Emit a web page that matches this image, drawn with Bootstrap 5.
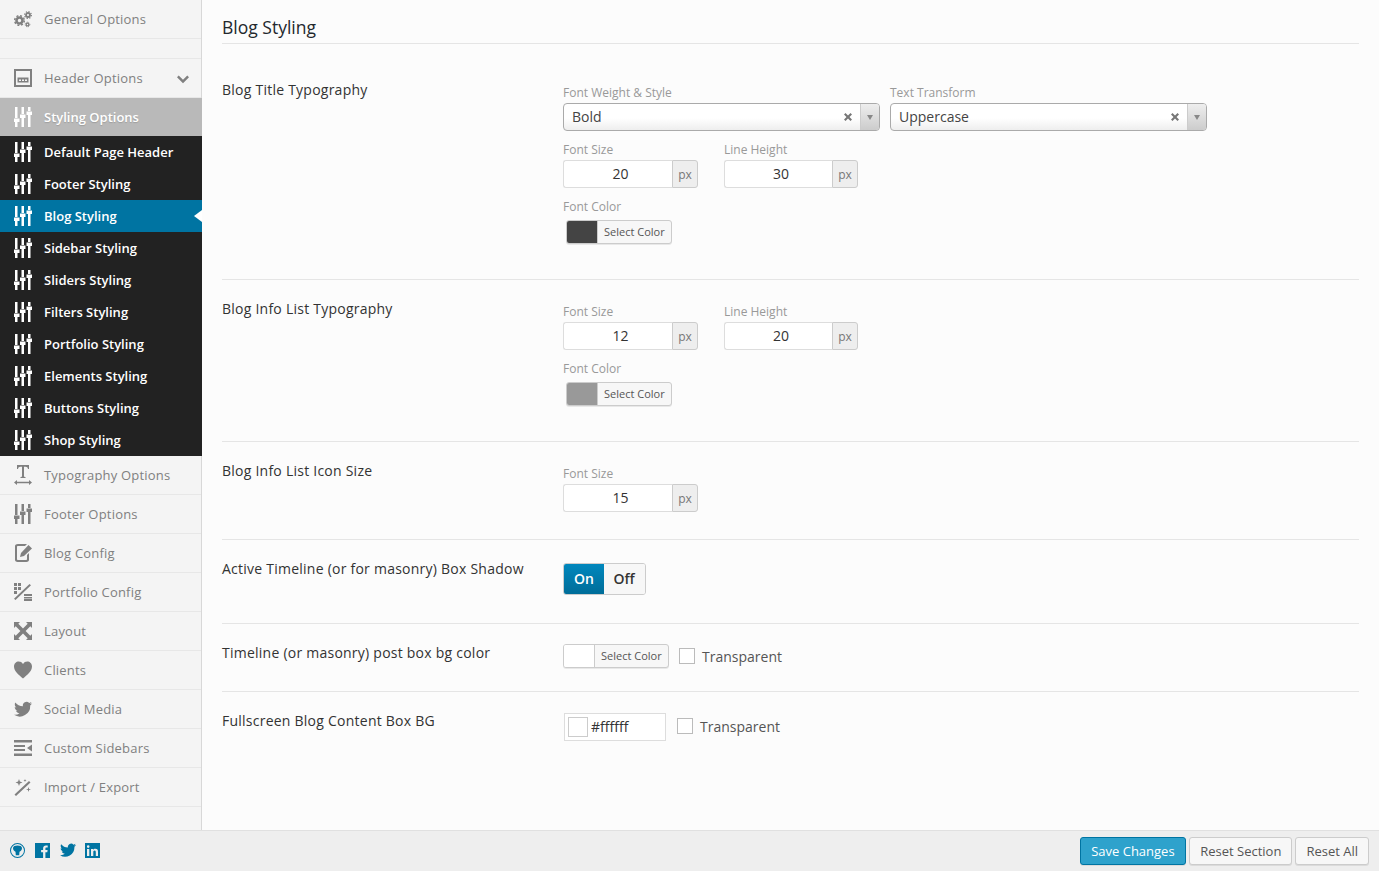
<!DOCTYPE html>
<html lang="en">
<head>
  <meta charset="UTF-8" />
  <meta name="viewport" content="width=device-width, initial-scale=1.0"/>
  <title>Blog Styling</title>
  <link href="https://cdn.jsdelivr.net/npm/bootstrap@5.3.3/dist/css/bootstrap.min.css" rel="stylesheet">
  <style>
    html, body { height: 100%; }
    body { font-family: "Open Sans", "Liberation Sans", sans-serif; font-size: 14px; color: #333; background: #fcfcfc; overflow: hidden; }
    .page-wrap { height: 871px; }
    .side-col { width: 202px; flex: none; background: #f4f4f4; border-right: 1px solid #d8d8d8; }
    .side-item { height: 39px; padding: 2px 0 0 14px; border-bottom: 1px solid #e7e7e7; color: #808080; font-size: 13px; font-weight: 500; letter-spacing: .2px; text-decoration: none; }
    .side-item svg { width: 18px; height: 20px; margin: -2px 12px 0 0; flex: none; fill: currentColor; }
    .side-spacer { height: 20px; border-bottom: 1px solid #e7e7e7; }
    .side-item.is-open { background: #b9b9b9; color: #fff; font-weight: 600; letter-spacing: 0; border-bottom: 0; height: 38px; margin-right: -1px; text-shadow: 0 1px 1px rgba(0,0,0,.15); }
    .side-item svg.side-chevron { margin: 0 12px 0 auto; width: 12px; height: 12px; }
    .sub-list { background: #222; margin-right: -1px; }
    .sub-item { height: 32px; padding: 2px 0 0 14px; color: #fff; font-size: 13px; font-weight: 600; position: relative; text-decoration: none; }
    .sub-item svg { width: 18px; height: 20px; margin-right: 12px; flex: none; fill: currentColor; margin-top: -2px; }
    .sub-item.is-current { background: #0074a2; }
    .sub-item.is-current::after { content: ""; position: absolute; right: 0; top: 10px; border: 6px solid transparent; border-right: 8px solid #fff; border-left: 0; }
    .main-col { padding: 0 20px; min-width: 0; }
    .main-title { font-size: 17.5px; font-weight: 500; line-height: 24px; padding: 15px 0 4px; margin: 0; color: #23282d; border-bottom: 1px solid #e5e5e5; height: 44px; }
    .opt-row { border-bottom: 1px solid #e5e5e5; display: flex; }
    .opt-row.no-line { border-bottom: 0; }
    .opt-name { width: 341px; flex: none; font-size: 14px; font-weight: 500; letter-spacing: .24px; line-height: 20px; color: #333; white-space: nowrap; }
    .opt-body { flex: 1; min-width: 0; }
    .fld-label { display: block; font-size: 12px; line-height: 14px; color: #999; margin-bottom: 3px; }
    .pick-box { height: 28px; width: 317px; border: 1px solid #aaa; border-radius: 4px; background: linear-gradient(#fff 55%, #eee); padding-left: 8px; }
    .pick-box span.val { font-size: 14px; color: #444; flex: 1; margin-top: -2px; }
    .pick-x { width: 8px; height: 8px; margin-right: 8px; fill: #777; }
    .pick-arrow { width: 19px; height: 100%; border-left: 1px solid #ccc; background: linear-gradient(#eee, #ccc); border-radius: 0 3px 3px 0; }
    .pick-arrow i { display: block; border: 3px solid transparent; border-top: 5px solid #888; border-bottom: 0; }
    .num-group { height: 28px; display: flex; }
    .num-input { width: 109px; padding-left: 5px; border: 1px solid #ddd; border-right: 0; border-radius: 3px 0 0 3px; background: #fff; text-align: center; font-size: 14px; line-height: 26px; color: #333; }
    .num-input.is-short { width: 108px; }
    .num-unit { width: 26px; border: 1px solid #ccc; border-radius: 0 3px 3px 0; background: #eee; color: #777; font-size: 12px; text-align: center; line-height: 28px; }
    .color-btn { height: 24px; width: 106px; margin-left: 3px; border: 1px solid #ccc; border-radius: 3px; background: #f7f7f7; box-shadow: 0 1px 0 rgba(0,0,0,.08); overflow: hidden; font-size: 11px; color: #555; }
    .color-btn i { display: block; width: 31px; height: 100%; border-right: 1px solid #ccc; flex: none; }
    .color-btn span { padding-left: 6px; white-space: nowrap; }
    .switch-box { height: 32px; width: 83px; border: 1px solid #ccc; border-radius: 3px; overflow: hidden; font-size: 14px; font-weight: 600; }
    .switch-on { width: 40px; background: linear-gradient(#0087bd, #006d99); color: #fff; text-align: center; line-height: 30px; }
    .switch-off { flex: 1; background: #f7f7f7; color: #333; text-align: center; line-height: 30px; padding-right: 1px; }
    .tick-box { width: 16px; height: 16px; border: 1px solid #bbb; background: #fff; flex: none; }
    .tick-text { font-size: 14px; color: #555; margin-left: 7px; }
    .hex-box { width: 102px; height: 28px; margin-top: 1px; border: 1px solid #ddd; background: #fff; padding-left: 3px; font-size: 14px; color: #333; }
    .hex-box i { display: block; width: 20px; height: 20px; border: 1px solid #ccc; margin-right: 3px; }
    .foot-bar { height: 41px; flex: none; background: #eee; border-top: 1px solid #e0e0e0; padding: 0 10px 2px; }
    .foot-bar svg { width: 15px; height: 15px; fill: #0074a2; }
    .foot-bar svg.foot-bird { width: 16px; height: 16px; margin: 0 -.5px; }
    .foot-btn { height: 28px; font-size: 13px; line-height: 26px; padding: 0 10px; border-radius: 3px; border: 1px solid #ccc; background: #f7f7f7; color: #555; box-shadow: 0 1px 0 rgba(0,0,0,.08); }
    .foot-btn.is-save { background: #2ea2cc; border-color: #0074a2; color: #fff; padding-right: 10px; width: 106px; }
    .foot-btns { margin-top: 2px; gap: 3px; margin-left: auto; }
  </style>
</head>
<body>
  <svg width="0" height="0" class="d-block">
    <symbol id="ic-sliders" viewBox="0 0 18 20"><path d="M1 0h2.500v11H1zM1 15h2.500v5H1zM0 11.500h5.500V15H0zM7.500 0H10v7H7.500zM7.500 11H10v9H7.500zM6 7.500h5.500V11H6zM14 0h2.500v4H14zM14 8h2.500v12H14zM12.500 4.500H18V8h-5.500z"/></symbol>
    <symbol id="ic-gears" viewBox="0 0 18 20"><g fill="none" stroke="currentColor"><circle cx="5.500" cy="11.500" r="3" stroke-width="2.600"/><circle cx="5.500" cy="11.500" r="4.800" stroke-width="1.500" stroke-dasharray="2 1.770"/><circle cx="14" cy="6" r="2" stroke-width="1.800"/><circle cx="14" cy="6" r="3.400" stroke-width="1.200" stroke-dasharray="1.300 1.370"/><circle cx="13.500" cy="15.500" r="1.300" stroke-width="1.200"/><circle cx="13.500" cy="15.500" r="2.300" stroke-width="1" stroke-dasharray="1 .8"/></g></symbol>
    <symbol id="ic-header" viewBox="0 0 18 20"><path fill-rule="evenodd" d="M0 1h18v18H0zM2 3v14h14V3zM3.500 9.500h11v5h-11zM5 11.500v1.500h2v-1.500zM8 11.500v1.500h2v-1.500zM11 11.500v1.500h2v-1.500z"/></symbol>
    <symbol id="ic-chevron" viewBox="0 0 14 14"><path d="M2 3l5 5 5-5 2 2-7 7-7-7z"/></symbol>
    <symbol id="ic-type" viewBox="0 0 18 20"><path d="M3 0h12v4h-1c-.2-1.600-1-2.300-2.500-2.300H10V11c0 .8.400 1 1.500 1v1h-5v-1c1.100 0 1.500-.2 1.500-1V1.700H6.500C5 1.700 4.200 2.400 4 4H3zM0 17.500l3-2.500v1.700h12V15l3 2.500-3 2.500v-1.700H3V20z"/></symbol>
    <symbol id="ic-doc" viewBox="0 0 18 20"><path d="M4 1h9l-2 2H4c-.6 0-1 .4-1 1v12c0 .6.400 1 1 1h8c.6 0 1-.4 1-1v-4l2-2v7c0 1.100-1.400 2-2.500 2h-9C2.400 19 1 18.100 1 17V3c0-1.100 1.400-2 3-2z"/><path d="M14.500 2L18 5.500 10 13l-4 1 1-4z"/></symbol>
    <symbol id="ic-percent" viewBox="0 0 18 20"><path d="M0 1h3v3H0zM4 1h3v3H4zM0 5h3v3H0zM4 5h3v3H4zM0 9h3v3H0zM15.500 2L17 3.300 1.500 18 0 16.700zM10 12h8v2h-8zM10 15h8v1.500h-8zM10 17h8v2h-8z"/></symbol>
    <symbol id="ic-arrows" viewBox="0 0 18 20"><path d="M0 1h6L4.300 2.700 9 7.400l4.700-4.700L12 1h6v6l-1.700-1.700L11.600 10l4.700 4.700L18 13v6h-6l1.700-1.700L9 12.600l-4.700 4.700L6 19H0v-6l1.700 1.700L6.400 10 1.700 5.300 0 7z"/></symbol>
    <symbol id="ic-heart" viewBox="0 0 18 20"><path d="M9 18.500C5 15 0 11.500 0 6.500 0 3.500 2.200 1.500 4.700 1.500 6.500 1.500 8 2.300 9 4c1-1.700 2.500-2.500 4.300-2.500C15.800 1.500 18 3.500 18 6.500c0 5-5 8.500-9 12z"/></symbol>
    <symbol id="ic-bird" viewBox="0 0 18 18"><path d="M18 3.500c-.7.3-1.400.5-2.100.6.800-.5 1.300-1.200 1.600-2-.7.400-1.500.7-2.300.9A3.700 3.700 0 0 0 8.900 6.300C5.800 6.200 3.100 4.700 1.300 2.500c-1 1.700-.5 3.800 1.100 4.900-.6 0-1.200-.2-1.700-.5 0 1.800 1.300 3.300 3 3.700-.5.100-1.100.2-1.700.1.500 1.500 1.900 2.500 3.500 2.600A7.500 7.500 0 0 1 0 14.800 10.500 10.500 0 0 0 16.200 5.400c.7-.5 1.300-1.200 1.800-1.900z"/></symbol>
    <symbol id="ic-sidebars" viewBox="0 0 18 20"><path d="M0 2h18v2.500H0zM0 7h11v2H0zM0 11h11v2H0zM0 15.500h18V18H0zM18 6.500v7L13 10z"/></symbol>
    <symbol id="ic-wand" viewBox="0 0 18 20"><path d="M15 4l1.500 1.500L2 19 .5 17.500zM5 2l.9 2.600L8.500 5.500 5.900 6.400 5 9 4.100 6.400 1.500 5.500 4.100 4.600zM14.500 10l.6 1.900 1.900.6-1.900.6-.6 1.900-.6-1.900-1.900-.6 1.900-.6zM11 2l.4 1.100 1.100.4-1.100.4L11 5l-.4-1.100-1.100-.4 1.100-.4z"/></symbol>
    <symbol id="ic-fb" viewBox="0 0 15 15"><path fill-rule="evenodd" d="M0 0h15v15H0zM10.400 15V9.300h1.900l.3-2.300h-2.200V5.600c0-.7.200-1.100 1.100-1.100h1.200V2.500c-.2 0-.9-.1-1.700-.1-1.700 0-2.900 1-2.900 3V7h-2v2.300h2V15z"/></symbol>
    <symbol id="ic-in" viewBox="0 0 15 15"><path fill-rule="evenodd" d="M0 0h15v15H0zM2 6v7h2.300V6zM3.200 2.300a1.300 1.300 0 1 0 0 2.600 1.300 1.300 0 0 0 0-2.600zM6 6v7h2.300V9.400c0-1 .2-1.800 1.300-1.800s1.200 1 1.200 1.900V13H13V9c0-2-.5-3.200-2.700-3.200-1.100 0-1.800.6-2.100 1.100V6z"/></symbol>
    <symbol id="ic-globe" viewBox="0 0 15 15"><path fill-rule="evenodd" d="M7.500 0a7.500 7.500 0 1 1 0 15 7.500 7.500 0 0 1 0-15zm0 1a6.500 6.500 0 1 0 0 13 6.500 6.500 0 0 0 0-13z"/><path d="M3 5C3 3.300 5 2.500 7.500 2.500S12 3.300 12 5c0 2.300-1.500 3.300-2.500 3.800l-.3 3.500H5.800L5.500 8.800C4.500 8.300 3 7.300 3 5z"/></symbol>
  </svg>

  <div class="page-wrap d-flex flex-column">
    <div class="d-flex flex-grow-1" style="min-height:0">
      <nav class="side-col">
        <a class="side-item d-flex align-items-center"><svg><use href="#ic-gears"/></svg>General Options</a>
        <div class="side-spacer"></div>
        <a class="side-item d-flex align-items-center"><svg><use href="#ic-header"/></svg>Header Options<svg class="side-chevron"><use href="#ic-chevron"/></svg></a>
        <a class="side-item is-open d-flex align-items-center"><svg><use href="#ic-sliders"/></svg>Styling Options</a>
        <div class="sub-list">
          <a class="sub-item d-flex align-items-center"><svg><use href="#ic-sliders"/></svg>Default Page Header</a>
          <a class="sub-item d-flex align-items-center"><svg><use href="#ic-sliders"/></svg>Footer Styling</a>
          <a class="sub-item is-current d-flex align-items-center"><svg><use href="#ic-sliders"/></svg>Blog Styling</a>
          <a class="sub-item d-flex align-items-center"><svg><use href="#ic-sliders"/></svg>Sidebar Styling</a>
          <a class="sub-item d-flex align-items-center"><svg><use href="#ic-sliders"/></svg>Sliders Styling</a>
          <a class="sub-item d-flex align-items-center"><svg><use href="#ic-sliders"/></svg>Filters Styling</a>
          <a class="sub-item d-flex align-items-center"><svg><use href="#ic-sliders"/></svg>Portfolio Styling</a>
          <a class="sub-item d-flex align-items-center"><svg><use href="#ic-sliders"/></svg>Elements Styling</a>
          <a class="sub-item d-flex align-items-center"><svg><use href="#ic-sliders"/></svg>Buttons Styling</a>
          <a class="sub-item d-flex align-items-center"><svg><use href="#ic-sliders"/></svg>Shop Styling</a>
        </div>
        <a class="side-item d-flex align-items-center"><svg><use href="#ic-type"/></svg>Typography Options</a>
        <a class="side-item d-flex align-items-center"><svg><use href="#ic-sliders"/></svg>Footer Options</a>
        <a class="side-item d-flex align-items-center"><svg><use href="#ic-doc"/></svg>Blog Config</a>
        <a class="side-item d-flex align-items-center"><svg><use href="#ic-percent"/></svg>Portfolio Config</a>
        <a class="side-item d-flex align-items-center"><svg><use href="#ic-arrows"/></svg>Layout</a>
        <a class="side-item d-flex align-items-center"><svg><use href="#ic-heart"/></svg>Clients</a>
        <a class="side-item d-flex align-items-center"><svg><use href="#ic-bird"/></svg>Social Media</a>
        <a class="side-item d-flex align-items-center"><svg><use href="#ic-sidebars"/></svg>Custom Sidebars</a>
        <a class="side-item d-flex align-items-center"><svg><use href="#ic-wand"/></svg>Import / Export</a>
      </nav>

      <main class="main-col flex-grow-1">
        <h2 class="main-title">Blog Styling</h2>

        <div class="opt-row" style="height:236px;padding-top:36px">
          <div class="opt-name">Blog Title Typography</div>
          <div class="opt-body" style="padding-top:6px">
            <div class="d-flex" style="gap:10px">
              <div>
                <span class="fld-label">Font Weight &amp; Style</span>
                <div class="pick-box d-flex align-items-center"><span class="val">Bold</span><svg class="pick-x" viewBox="0 0 8 8"><path d="M0 1.500L1.500 0 4 2.500 6.500 0 8 1.500 5.500 4 8 6.500 6.500 8 4 5.500 1.500 8 0 6.500 2.500 4z"/></svg><div class="pick-arrow d-flex align-items-center justify-content-center"><i></i></div></div>
              </div>
              <div>
                <span class="fld-label">Text Transform</span>
                <div class="pick-box d-flex align-items-center"><span class="val">Uppercase</span><svg class="pick-x" viewBox="0 0 8 8"><path d="M0 1.500L1.500 0 4 2.500 6.500 0 8 1.500 5.500 4 8 6.500 6.500 8 4 5.500 1.500 8 0 6.500 2.500 4z"/></svg><div class="pick-arrow d-flex align-items-center justify-content-center"><i></i></div></div>
              </div>
            </div>
            <div class="d-flex" style="gap:26px;margin-top:12px">
              <div><span class="fld-label">Font Size</span><div class="num-group"><div class="num-input">20</div><div class="num-unit">px</div></div></div>
              <div><span class="fld-label">Line Height</span><div class="num-group"><div class="num-input is-short">30</div><div class="num-unit">px</div></div></div>
            </div>
            <span class="fld-label" style="margin-top:12px;margin-bottom:6px">Font Color</span>
            <div class="color-btn d-flex align-items-center"><i style="background:#444"></i><span>Select Color</span></div>
          </div>
        </div>

        <div class="opt-row" style="height:162px;padding-top:19px">
          <div class="opt-name">Blog Info List Typography</div>
          <div class="opt-body" style="padding-top:6px">
            <div class="d-flex" style="gap:26px">
              <div><span class="fld-label">Font Size</span><div class="num-group"><div class="num-input">12</div><div class="num-unit">px</div></div></div>
              <div><span class="fld-label">Line Height</span><div class="num-group"><div class="num-input is-short">20</div><div class="num-unit">px</div></div></div>
            </div>
            <span class="fld-label" style="margin-top:12px;margin-bottom:6px">Font Color</span>
            <div class="color-btn d-flex align-items-center"><i style="background:#999"></i><span>Select Color</span></div>
          </div>
        </div>

        <div class="opt-row" style="height:98px;padding-top:19px">
          <div class="opt-name">Blog Info List Icon Size</div>
          <div class="opt-body" style="padding-top:6px">
            <span class="fld-label">Font Size</span><div class="num-group"><div class="num-input">15</div><div class="num-unit">px</div></div>
          </div>
        </div>

        <div class="opt-row" style="height:84px;padding-top:19px">
          <div class="opt-name">Active Timeline (or for masonry) Box Shadow</div>
          <div class="opt-body" style="padding-top:4px">
            <div class="switch-box d-flex"><div class="switch-on">On</div><div class="switch-off">Off</div></div>
          </div>
        </div>

        <div class="opt-row" style="height:68px;padding-top:19px">
          <div class="opt-name">Timeline (or masonry) post box bg color</div>
          <div class="opt-body d-flex align-items-center" style="height:26px">
            <div class="color-btn d-flex align-items-center" style="margin-left:0"><i style="background:#fff"></i><span>Select Color</span></div>
            <div class="tick-box" style="margin-left:10px"></div><span class="tick-text">Transparent</span>
          </div>
        </div>

        <div class="opt-row no-line" style="padding-top:19px">
          <div class="opt-name">Fullscreen Blog Content Box BG</div>
          <div class="opt-body d-flex align-items-center" style="height:30px;padding-left:1px">
            <div class="hex-box d-flex align-items-center"><i></i>#ffffff</div>
            <div class="tick-box" style="margin-left:11px"></div><span class="tick-text">Transparent</span>
          </div>
        </div>
      </main>
    </div>

    <footer class="foot-bar d-flex align-items-center">
      <div class="d-flex align-items-center" style="gap:10px">
        <svg><use href="#ic-globe"/></svg>
        <svg><use href="#ic-fb"/></svg>
        <svg class="foot-bird"><use href="#ic-bird"/></svg>
        <svg><use href="#ic-in"/></svg>
      </div>
      <div class="foot-btns d-flex">
        <div class="foot-btn is-save">Save Changes</div>
        <div class="foot-btn">Reset Section</div>
        <div class="foot-btn">Reset All</div>
      </div>
    </footer>
  </div>
  <script src="https://cdn.jsdelivr.net/npm/bootstrap@5.3.3/dist/js/bootstrap.bundle.min.js"></script>
</body>
</html>
